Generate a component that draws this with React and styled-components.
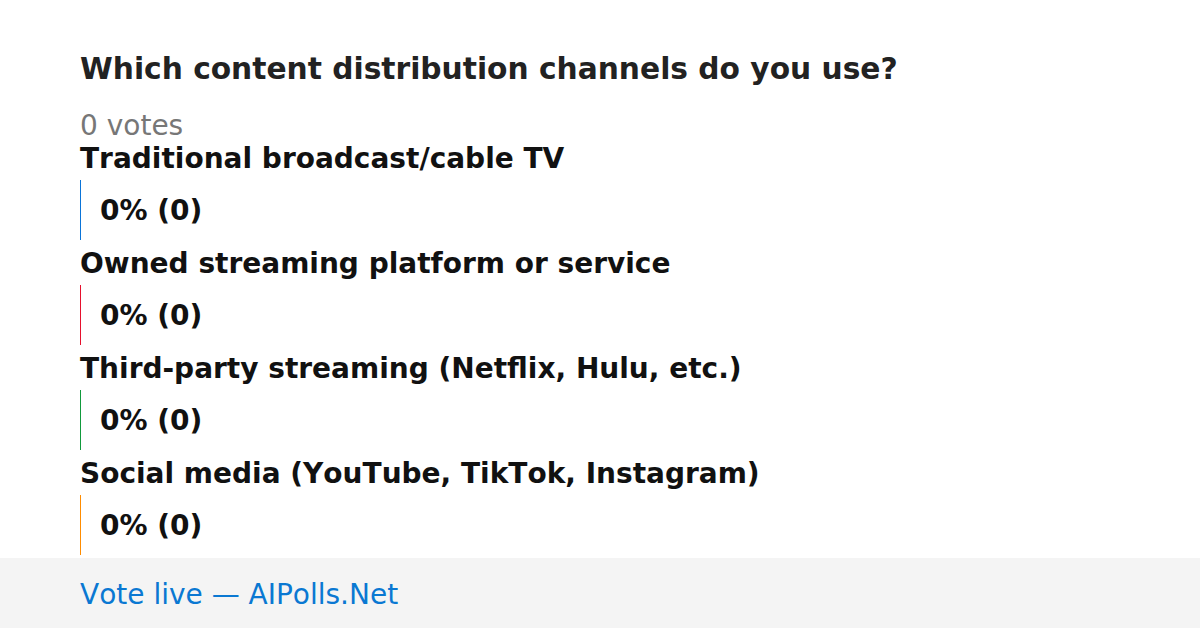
import React from "react";
import styled, { createGlobalStyle } from "styled-components";

const Global = createGlobalStyle`
  html, body { margin: 0; padding: 0; background: #fff; }
  body {
    font-family: "DejaVu Sans", "Liberation Sans", sans-serif;
    font-kerning: none;
  }
`;

const Page = styled.div`
  width: 1200px;
  height: 628px;
  display: flex;
  flex-direction: column;
  overflow: hidden;
`;

const Main = styled.main`
  flex: 1;
  padding: 51px 80px 3px;
  display: flex;
  flex-direction: column;
`;

const Title = styled.h1`
  margin: 0;
  font-size: 29.7px;
  line-height: 36px;
  font-weight: 700;
  color: #222;
`;

const Votes = styled.div`
  margin-top: 23px;
  font-size: 28px;
  line-height: 32px;
  color: #777;
`;

const OptionList = styled.div`
  display: flex;
  flex-direction: column;
  gap: 7px;
`;

const Option = styled.section`
  display: flex;
  flex-direction: column;
`;

const Label = styled.div`
  font-size: 28px;
  line-height: 34px;
  font-weight: 700;
  color: #111;
`;

const Bar = styled.div`
  height: 60px;
  margin-top: 4px;
  border-left: 1px solid ${(p) => p.$color};
  padding-left: 19px;
  display: flex;
  align-items: center;
  font-size: 28px;
  font-weight: 700;
  color: #111;
`;

const Footer = styled.footer`
  height: 70px;
  box-sizing: border-box;
  flex-shrink: 0;
  background: #f4f4f4;
  padding: 3px 80px 0;
  display: flex;
  align-items: center;
  font-size: 28px;
  color: #0a78d2;
`;

const options = [
  { label: "Traditional broadcast/cable TV", color: "#0a74d8" },
  { label: "Owned streaming platform or service", color: "#e6102d" },
  { label: "Third-party streaming (Netflix, Hulu, etc.)", color: "#119a3c" },
  { label: "Social media (YouTube, TikTok, Instagram)", color: "#ff8c00" },
];

export default function App() {
  return (
    <>
      <Global />
      <Page>
        <Main>
          <Title>Which content distribution channels do you use?</Title>
          <Votes>0 votes</Votes>
          <OptionList>
            {options.map((o) => (
              <Option key={o.label}>
                <Label>{o.label}</Label>
                <Bar $color={o.color}>0% (0)</Bar>
              </Option>
            ))}
          </OptionList>
        </Main>
        <Footer>Vote live — AIPolls.Net</Footer>
      </Page>
    </>
  );
}
